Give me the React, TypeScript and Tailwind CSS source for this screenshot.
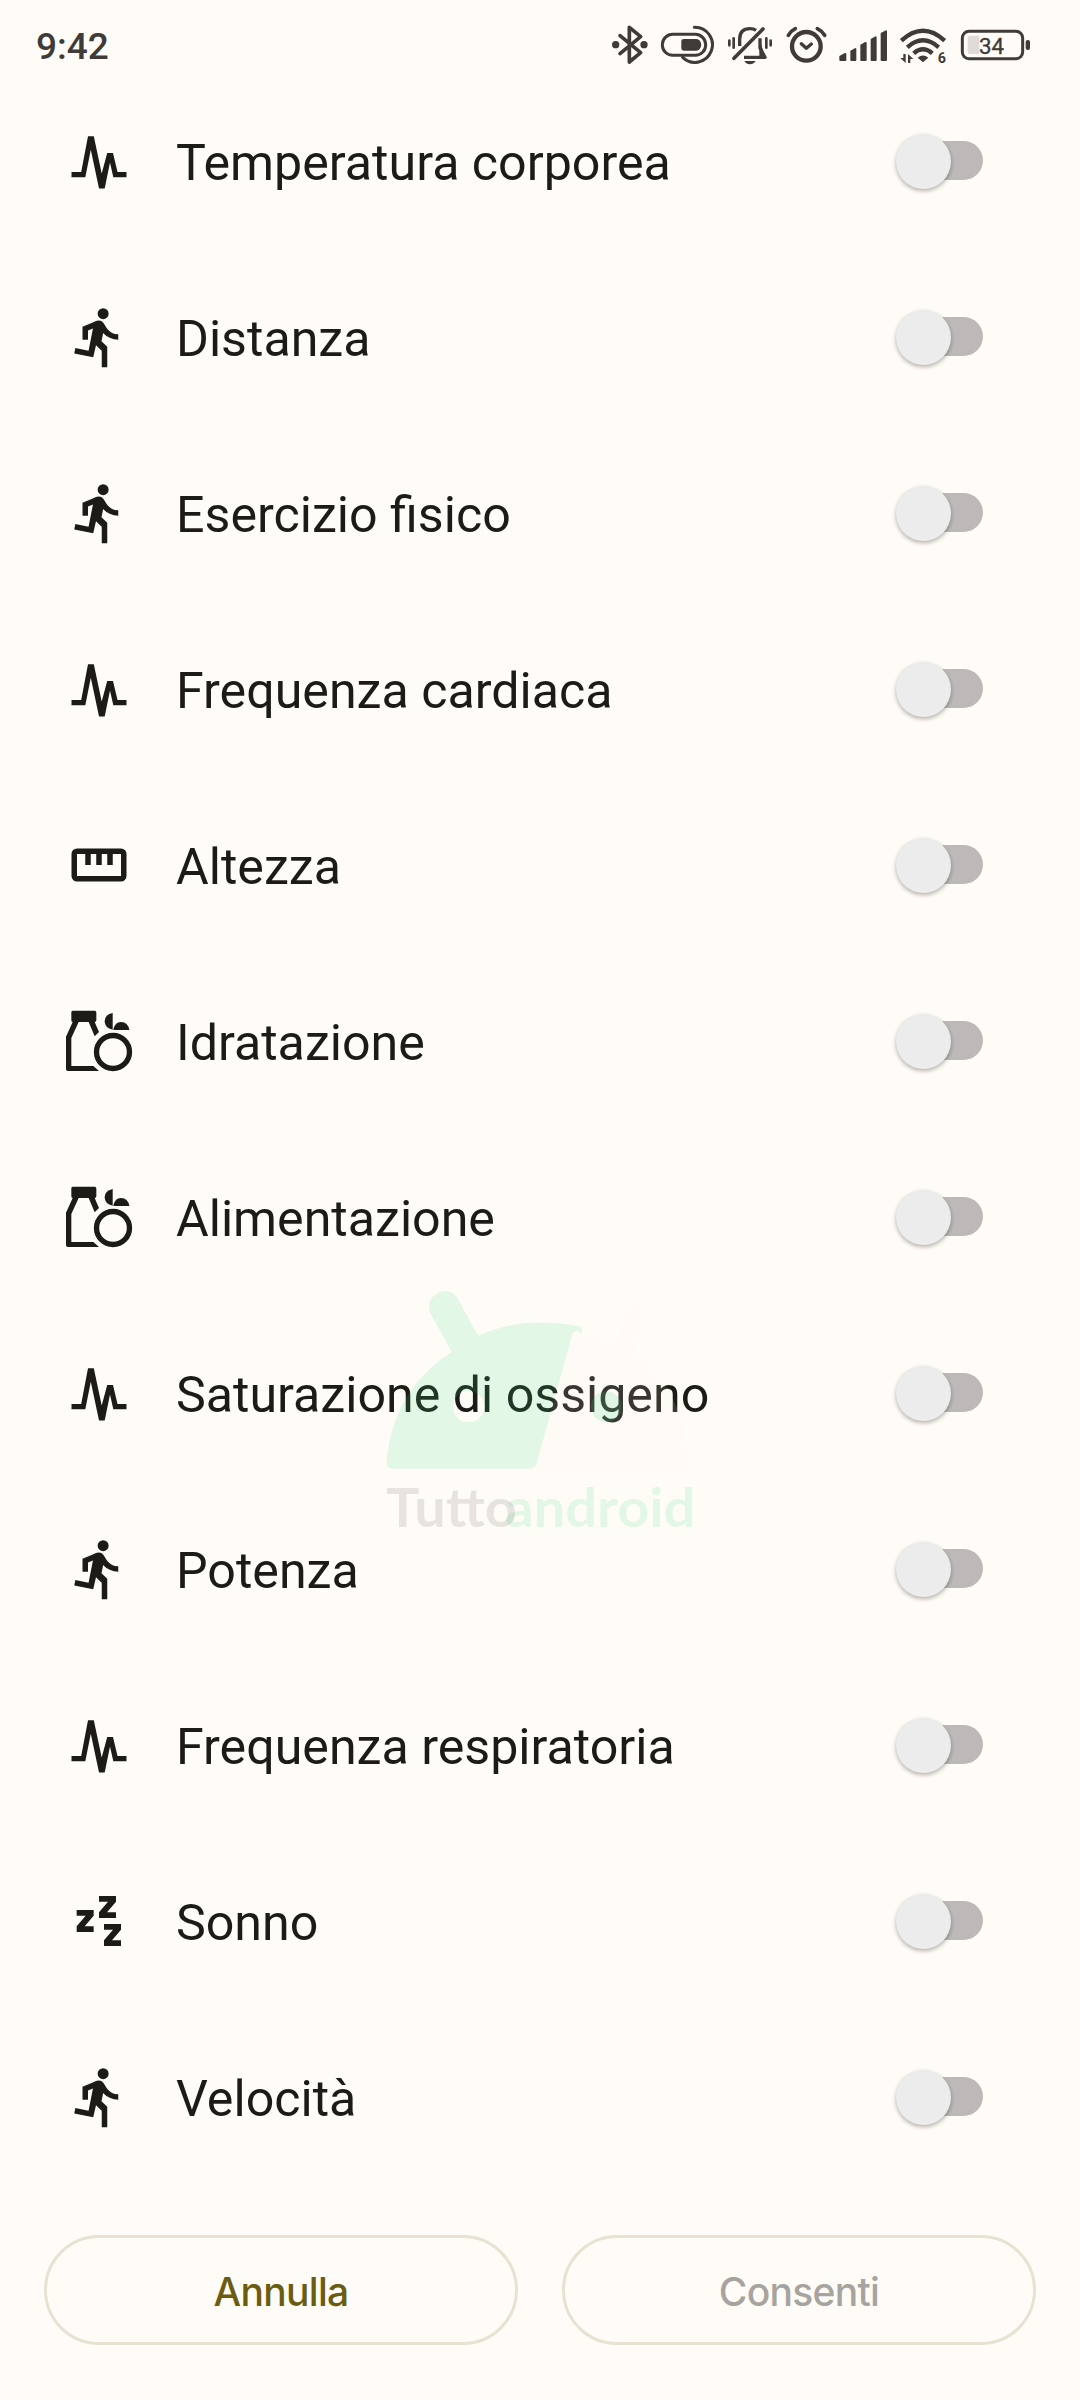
import React from "react";

type IconName = "vitals" | "run" | "ruler" | "food" | "sleep";

const items: { label: string; icon: IconName }[] = [
  { label: "Temperatura corporea", icon: "vitals" },
  { label: "Distanza", icon: "run" },
  { label: "Esercizio fisico", icon: "run" },
  { label: "Frequenza cardiaca", icon: "vitals" },
  { label: "Altezza", icon: "ruler" },
  { label: "Idratazione", icon: "food" },
  { label: "Alimentazione", icon: "food" },
  { label: "Saturazione di ossigeno", icon: "vitals" },
  { label: "Potenza", icon: "run" },
  { label: "Frequenza respiratoria", icon: "vitals" },
  { label: "Sonno", icon: "sleep" },
  { label: "Velocità", icon: "run" },
];

function RowIcon({ name }: { name: IconName }) {
  const cls = "size-[66px] shrink-0 overflow-visible";
  if (name === "run")
    return (
      <svg className={cls} viewBox="0 -960 960 960" fill="currentColor">
        <path d="M520-40v-240l-84-80-40 176-276-56 16-80 192 40 64-324-72 28v136h-80v-188l158-68q35-15 51.5-19.5T480-720q21 0 39 11t29 29l40 64q26 42 70.5 69T760-520v80q-66 0-123.5-27.5T540-540l-24 120 84 80v300h-80Zm20-700q-33 0-56.5-23.5T460-820q0-33 23.5-56.5T540-900q33 0 56.5 23.5T620-820q0 33-23.5 56.5T540-740Z" />
      </svg>
    );
  if (name === "ruler")
    return (
      <svg className={cls} viewBox="0 -960 960 960" fill="currentColor">
        <path d="M160-240q-33 0-56.5-23.5T80-320v-320q0-33 23.5-56.5T160-720h640q33 0 56.5 23.5T880-640v320q0 33-23.5 56.5T800-240H160Zm0-80h640v-320H680v160h-80v-160h-80v160h-80v-160h-80v160h-80v-160H160v320Z" />
      </svg>
    );
  if (name === "vitals")
    return (
      <svg className={cls} viewBox="0 0 66 66" fill="currentColor">
        <path d="M5.5 44H15.2L22 8.2H27.8L35.7 45.5L41.2 25H47L51.5 44H60.5V49.3H47.3L44 34.5L38.7 60.5H33L24.8 21.8L19.3 49.3H5.5Z" />
      </svg>
    );
  if (name === "food")
    return (
      <svg className={cls} viewBox="48 54 198 198" fill="currentColor">
        <path d="M68 62H134Q139 62 139 67V91Q139 96 134 96L147 126L134 139L116 96H86L64 144V228H130L147 243H54Q48 243 48 237V140L68 96Q64 96 64 91V67Q64 62 68 62Z" />
        <circle cx="189" cy="186" r="49.5" fill="none" stroke="currentColor" strokeWidth="16" />
        <path d="M188 69Q164 74 164 94Q164 114 188 119Z" />
        <path d="M190 120Q194 96 213 96Q234 96 238 120Z" />
      </svg>
    );
  return (
    <svg className={cls} viewBox="48 54 198 198" fill="currentColor">
      <path d="M80 120H131V137L104 169H131V186H80V169L107 137H80Z" />
      <path d="M147 78H198V95L171 127H198V144H147V127L174 95H147Z" />
      <path d="M162 162H213V179L186 211H213V228H162V211L189 179H162Z" />
    </svg>
  );
}

function Toggle() {
  return (
    <button role="switch" aria-checked="false" className="relative flex h-[55px] w-[87px] shrink-0 items-start pt-[7px]">
      <span className="ml-2 h-[39px] flex-1 rounded-full bg-[#bdb9b8]" />
      <span className="absolute left-0 top-0 size-[55px] rounded-full bg-[#ececed] shadow-[0_2px_4px_rgba(0,0,0,0.3)]" />
    </button>
  );
}

function StatusBar() {
  const cls = "h-[41px] shrink-0";
  const line = { fill: "none", stroke: "currentColor" } as const;
  return (
    <header className="flex h-[73px] shrink-0 items-start pl-9 pr-12 pt-6 text-[#403b39]">
      <span className="mt-px flex-1 text-[37px] font-medium leading-[43px]">9:42</span>
      <svg className={`${cls} w-[39px]`} viewBox="60 42 117 123" fill="currentColor">
        <path d="M90 77L152 128L118 156V52L152 80L90 131" {...line} strokeWidth="11" strokeLinejoin="round" strokeLinecap="round" />
        <circle cx="77" cy="104" r="11" />
        <circle cx="162" cy="104" r="11" />
      </svg>
      <svg className={`${cls} ml-[11px] w-[56px]`} viewBox="210 42 168 123" fill="currentColor">
        <rect x="217" y="73" width="130" height="63" rx="31" {...line} strokeWidth="9" />
        <path d="M281 87H317Q332 87 334 104Q332 122 317 122H281Q274 122 274 115V94Q274 87 281 87Z" />
        <path d="M313 52A52.500 52.500 0 1 1 278 142" {...line} strokeWidth="9" strokeLinecap="round" />
      </svg>
      <svg className={`${cls} ml-[10px] w-[48px]`} viewBox="408 42 144 123" fill="currentColor">
        <path d="M519 57L432 145" {...line} strokeWidth="11" strokeLinecap="round" />
        <path d="M449 108V88Q449 56 480 56Q491 56 498 61" {...line} strokeWidth="10" />
        <path d="M510 85V114L525 142H462" {...line} strokeWidth="10" strokeLinejoin="round" />
        <path d="M508 84V142H525Z" />
        <path d="M463 153H497Q490 163 480 163Q469 163 463 153Z" />
        <path d="M418 92V106M431 85V113M529 85V113M542 92V106" {...line} strokeWidth="8" strokeLinecap="round" />
      </svg>
      <svg className={`${cls} ml-[11px] w-[44px]`} viewBox="585 42 132 123">
        <circle cx="649" cy="109" r="43" {...line} strokeWidth="13" />
        <path d="M634 101L649 115L664 102" {...line} strokeWidth="10" strokeLinecap="round" strokeLinejoin="round" />
        <path d="M595 76Q602 63 616 56M682 56Q696 63 704 76" {...line} strokeWidth="11" strokeLinecap="round" />
      </svg>
      <svg className={`${cls} ml-[9px] w-[51px]`} viewBox="54 42 153 123" fill="currentColor" stroke="currentColor" strokeWidth="6" strokeLinejoin="round">
        <path d="M61 140L76 132V150H61ZM94 124L106 117V150H94ZM124 106L137 99V150H124ZM155 89L167 82V150H155ZM185 71L198 64V150H185Z" />
      </svg>
      <svg className={`${cls} ml-[10px] w-[49px]`} viewBox="237 42 147 123" fill="currentColor">
        <path d="M244 92Q309 33 374 92M262 112Q309 70 356 112M281 130Q309 106 337 130" {...line} strokeWidth="13" />
        <path d="M293 143Q309 130 325 143L309 157Z" />
        <path d="M250 132H257V159L241 144H250ZM264 159V132L280 147H271V159Z" />
        <text x="353" y="159" fontFamily="Roboto" fontWeight="700" fontSize="43">6</text>
      </svg>
      <svg className={`${cls} ml-[12px] w-[72px]`} viewBox="420 42 216 123" fill="currentColor">
        <path d="M443 77H478V132H450Q443 132 443 125Z" fill="#dfdbd9" />
        <rect x="427" y="64" width="181" height="82" rx="20" {...line} strokeWidth="9" />
        <rect x="617" y="90" width="13" height="30" rx="6" />
        <text x="477" y="131" fontFamily="Roboto" fontSize="67" stroke="currentColor" strokeWidth="1">34</text>
      </svg>
    </header>
  );
}

function Watermark() {
  return (
    <svg
      className="pointer-events-none absolute left-[360px] top-[1270px] h-[280px] w-[360px]"
      viewBox="0 0 1080 840"
    >
      <path
        fill="#f6ece6"
        fillOpacity=".13"
        d="M638 190L667 182Q715 190 765 220L805 110Q835 95 862 110L858 160L820 245Q985 370 985 603H524Z"
      />
      <g fill="#3ddc84" fillOpacity=".15">
        <path
          fillRule="evenodd"
          d="M275 246L211 129C189 75 265 40 292 84L355 197Q490 135 665 171V190Q648 178 638 190L530 580Q526 596 508 596H96Q78 596 80 574Q98 360 275 246ZM373 410A47 47 0 1 0 279 410A47 47 0 1 0 373 410Z"
        />
        <circle cx="739" cy="410" r="46" />
      </g>
      <g fontFamily="Lato" fontWeight="700" fontSize="160">
        <text x="78" y="771" textLength="392" lengthAdjust="spacingAndGlyphs" fill="#57504e" fillOpacity=".14">
          Tutto
        </text>
        <text x="436" y="771" textLength="570" lengthAdjust="spacingAndGlyphs" fill="#3ddc84" fillOpacity=".15">
          android
        </text>
      </g>
    </svg>
  );
}

export default function App() {
  return (
    <div className="relative flex h-[2400px] w-[1080px] flex-col overflow-hidden bg-[#fffcf7] font-[Roboto,sans-serif] text-[#1d1b16]">
      <StatusBar />
      <ul className="flex flex-col">
        {items.map((item) => (
          <li key={item.label} className="flex h-[176px] items-center pl-[66px] pr-[97px]">
            <RowIcon name={item.icon} />
            <span className="ml-11 mt-[3px] flex-1 whitespace-nowrap text-[50.15px] leading-[60px]">{item.label}</span>
            <Toggle />
          </li>
        ))}
      </ul>
      <footer className="mt-[50px] flex gap-11 px-11 font-[Inter,sans-serif] text-[39px] font-medium tracking-[-0.7px]">
        <button className="h-[110px] flex-1 rounded-full border-[3px] border-[#e7e2d1] pt-1 text-[#6b5d10]">Annulla</button>
        <button className="h-[110px] flex-1 rounded-full border-[3px] border-[#e7e2d1] pt-1 text-[#a7a49f]">Consenti</button>
      </footer>
      <Watermark />
    </div>
  );
}
